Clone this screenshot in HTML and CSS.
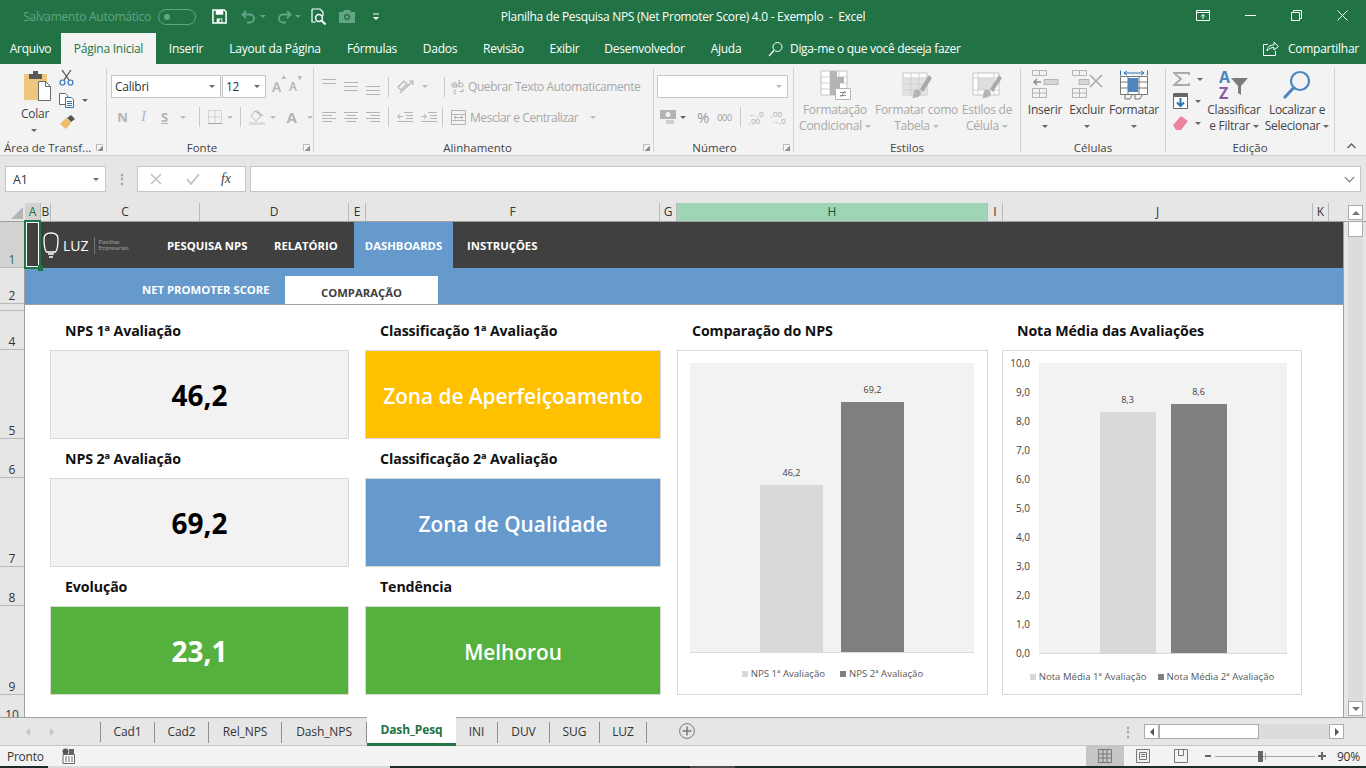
FILE: index.html
```html
<!DOCTYPE html>
<html lang="pt-BR">
<head>
  <meta charset="UTF-8" />
  <title>Planilha de Pesquisa NPS - Excel</title>
  <link rel="stylesheet" href="styles.css">
</head>
<body>
<div class="app">

  <!-- title bar -->
  <header class="titlebar">
    <div class="qat">
      <span class="autosave">Salvamento Automático</span>
      <span class="toggle"><i></i></span>
      <svg class="save" width="15" height="15" viewBox="0 0 16 16"><path d="M1 1h12l2 2v12H1z" fill="none" stroke="#fff" stroke-width="1.6"/><path d="M4 1h8v5H4zM5 10h6v5H5z" fill="#fff"/><path d="M8 11h2v3H8z" fill="#217346"/></svg>
      <svg class="undo" width="16" height="14" viewBox="0 0 16 14"><path d="M5 1 1.5 4.5 5 8M2 4.500h7a4 4 0 0 1 0 8H6" fill="none" stroke="#62a485" stroke-width="1.8"/></svg>
      <b class="caret dim"></b>
      <svg class="redo" width="16" height="14" viewBox="0 0 16 14"><path d="M11 1l3.500 3.500L11 8M14 4.500H7a4 4 0 0 0 0 8h3" fill="none" stroke="#62a485" stroke-width="1.8"/></svg>
      <b class="caret dim"></b>
      <svg class="preview" width="16" height="17" viewBox="0 0 16 17"><path d="M1 1h8l3 3v4M5 14H1V1" fill="none" stroke="#fff" stroke-width="1.2"/><circle cx="8" cy="10" r="3.400" fill="none" stroke="#fff" stroke-width="1.500"/><path d="m10.500 12.500 4 4" stroke="#fff" stroke-width="2"/></svg>
      <svg class="camera" width="16" height="13" viewBox="0 0 16 13"><path d="M0 2h4l1-2h6l1 2h4v11H0z" fill="#62a485"/><circle cx="8" cy="7" r="3" fill="#217346"/><circle cx="8" cy="7" r="1.600" fill="#62a485"/></svg>
      <svg class="custom" width="8" height="8" viewBox="0 0 8 8"><path d="M1 1h6" stroke="#fff"/><path d="M1 4h6L4 7z" fill="#fff"/></svg>
    </div>
    <div class="doc-title">Planilha de Pesquisa NPS (Net Promoter Score) 4.0 - Exemplo &nbsp;-&nbsp; Excel</div>
    <div class="winctl">
      <svg width="14" height="11" viewBox="0 0 14 11"><path d="M.5.500h13v10H.500zM.5 2.500h13M7 9V4.500M5 6.500l2-2 2 2" fill="none" stroke="#fff"/></svg>
      <svg width="11" height="11" viewBox="0 0 11 11"><path d="M0 5.500h11" stroke="#fff"/></svg>
      <svg width="11" height="11" viewBox="0 0 11 11"><path d="M.5 2.500h8v8h-8zM2.500 2.500v-2h8v8h-2" fill="none" stroke="#fff"/></svg>
      <svg width="11" height="11" viewBox="0 0 11 11"><path d="m.5.500 10 10M10.500.500l-10 10" stroke="#fff"/></svg>
    </div>
  </header>

  <!-- ribbon tabs -->
  <nav class="tabs">
    <a>Arquivo</a><a class="on">Página Inicial</a><a>Inserir</a><a>Layout da Página</a><a>Fórmulas</a><a>Dados</a><a>Revisão</a><a>Exibir</a><a>Desenvolvedor</a><a>Ajuda</a>
    <div class="tellme">
      <svg width="16" height="16" viewBox="0 0 16 16"><circle cx="9.500" cy="6" r="4.500" fill="none" stroke="#fff"/><path d="M6 9.500 1 15" stroke="#fff" stroke-width="1.200"/></svg>
      <span>Diga-me o que você deseja fazer</span>
    </div>
    <div class="share">
      <svg width="16" height="15" viewBox="0 0 16 15"><path d="M5 3.500H.5v11h12V10M4 10c0-4 3-6 7-6V1l4.500 4.500L11 9V6.500c-3 0-5 1-7 3.500z" fill="none" stroke="#fff"/></svg>
      <span>Compartilhar</span>
    </div>
  </nav>

  <!-- ribbon -->
  <section class="ribbon">
    <div class="group g-clip">
      <div class="body clip-body">
        <div class="paste">
          <svg width="29" height="31" viewBox="0 0 29 31"><path d="M1 4h23v26H1z" fill="#efc67d"/><path d="M6 4h13v5H6zM10 1h5v4h-5z" fill="#5a5a5a"/><path d="M15.500 11.500h7l5 5v14h-12z" fill="#fff" stroke="#6a6a6a"/><path d="M22.500 11.500v5h5" fill="none" stroke="#6a6a6a"/></svg>
          <span>Colar</span>
          <b class="caret"></b>
        </div>
        <div class="clip-tools">
          <svg width="15" height="16" viewBox="0 0 15 16"><path d="M3 0l7 10M12 0 5 10" stroke="#555" stroke-width="1.300"/><circle cx="3.500" cy="12.500" r="2.500" fill="none" stroke="#2f73b5" stroke-width="1.200"/><circle cx="11.500" cy="12.500" r="2.500" fill="none" stroke="#2f73b5" stroke-width="1.200"/></svg>
          <span class="with-caret"><svg width="16" height="15" viewBox="0 0 16 15"><path d="M.5.500h6l2 2v9h-8z" fill="#fff" stroke="#666"/><path d="M6.500 4.500h6l2 2v8h-8z" fill="#fff" stroke="#2f73b5"/><path d="M8 8.500h5M8 10.500h5M8 12.500h5" stroke="#2f73b5"/></svg><b class="caret"></b></span>
          <svg width="16" height="15" viewBox="0 0 16 15"><path d="M8 3l4-3 4 4-4 3z" fill="#555"/><path d="M1 9l6-6 5 5-5 6z" fill="#edbd6b"/></svg>
        </div>
      </div>
      <div class="glabel clip-label"><span>Área de Transf...</span><i class="launch"></i></div>
    </div>

    <div class="group g-font">
      <div class="body stack">
        <div class="row r-top">
          <div class="combo font-name"><span>Calibri</span><b class="caret"></b></div>
          <div class="combo font-size"><span>12</span><b class="caret"></b></div>
          <span class="grow-a">A<sup>▴</sup></span>
          <span class="shrink-a">A<sup>▾</sup></span>
        </div>
        <div class="row r-bot font-tools">
          <span class="fx fx-n">N</span><span class="fx fx-i">I</span><span class="fx fx-s">S</span><b class="caret off"></b>
          <i class="vsep first"></i>
          <svg width="14" height="14" viewBox="0 0 14 14"><path d="M.5.500h13v13H.500zM7 .5v13M.5 7h13" fill="none" stroke="#b9b9b9" stroke-dasharray="1 1"/><path d="M0 13.500h14" stroke="#a9a9a9"/></svg>
          <b class="caret off"></b>
          <i class="vsep"></i>
          <svg width="16" height="15" viewBox="0 0 16 15"><path d="M6 1l6 5-5 5-5-5z" fill="none" stroke="#b9b9b9"/><path d="M6 1 8 0l7 6-3 0z" fill="#c4c4c4"/><path d="M0 12h16v3H0z" fill="#dcdcdc"/></svg>
          <b class="caret off"></b>
          <span class="fx fx-a">A</span>
          <b class="caret off"></b>
        </div>
      </div>
      <div class="glabel"><span>Fonte</span><i class="launch"></i></div>
    </div>

    <div class="group g-align">
      <div class="body stack">
        <div class="row r-top align-row">
          <svg class="lines" width="14" height="9" viewBox="0 0 14 9"><path d="M0 .5h14M0 4.500h14" stroke="#b4b4b4"/></svg>
          <svg class="lines mid" width="14" height="9" viewBox="0 0 14 9"><path d="M0 .5h14M0 4.500h14M0 8.500h14" stroke="#b4b4b4"/></svg>
          <svg class="lines low" width="14" height="9" viewBox="0 0 14 9"><path d="M0 .5h14M0 4.500h14M0 8.500h14" stroke="#b4b4b4"/></svg>
          <i class="vsep"></i>
          <svg width="17" height="15" viewBox="0 0 17 15"><path d="M1 8l6-6 3 3-6 6zM3 14 15 3M12 2h4v4" fill="none" stroke="#b4b4b4" stroke-width="1.200"/></svg>
          <b class="caret off"></b>
          <i class="vsep wrap-sep"></i>
          <svg class="wrap-ico" width="13" height="15" viewBox="0 0 13 15"><path d="M1 6c0-3 5-3 5 0v2M6 6H2.500C.5 6 .5 8 2.500 8H6M8 1v7M8 5c2-2 4-1 4 1s-2 3-4 1M5 11.500c-3-1-3 3 0 3M12 10v2.500H9" fill="none" stroke="#a9a9a9"/></svg>
          <span class="off-text">Quebrar Texto Automaticamente</span>
        </div>
        <div class="row r-bot align-row">
          <svg class="lines" width="14" height="11" viewBox="0 0 14 11"><path d="M0 .5h14M0 3.500h10M0 6.500h14M0 9.500h10" stroke="#b4b4b4"/></svg>
          <svg class="lines" width="14" height="11" viewBox="0 0 14 11"><path d="M0 .5h14M2 3.500h10M0 6.500h14M2 9.500h10" stroke="#b4b4b4"/></svg>
          <svg class="lines" width="14" height="11" viewBox="0 0 14 11"><path d="M0 .5h14M4 3.500h10M0 6.500h14M4 9.500h10" stroke="#b4b4b4"/></svg>
          <i class="vsep"></i>
          <svg width="16" height="11" viewBox="0 0 16 11"><path d="M7 .5h9M9 3.500h7M9 6.500h7M0 9.500h16M6 4.500H1M3 2 .5 4.500 3 7" fill="none" stroke="#b4b4b4"/></svg>
          <svg width="16" height="11" viewBox="0 0 16 11"><path d="M7 .5h9M9 3.500h7M9 6.500h7M0 9.500h16M0 4.500h5M3 2l2.500 2.500L3 7" fill="none" stroke="#b4b4b4"/></svg>
          <i class="vsep merge-sep"></i>
          <svg class="merge-ico" width="15" height="15" viewBox="0 0 15 15"><path d="M.5.500h14v14H.500zM.5 4.500h14M.5 10.500h14M3 7.500h9M3 7.500l2-1.500M3 7.500 5 9M12 7.500 10 6M12 7.500 10 9" fill="none" stroke="#b4b4b4"/></svg>
          <span class="off-text">Mesclar e Centralizar</span>
          <b class="caret off merge-caret"></b>
        </div>
      </div>
      <div class="glabel"><span>Alinhamento</span><i class="launch"></i></div>
    </div>

    <div class="group g-num">
      <div class="body stack">
        <div class="row r-top">
          <div class="combo num-format"><span></span><b class="caret off"></b></div>
        </div>
        <div class="row r-bot num-row">
          <svg width="16" height="15" viewBox="0 0 16 15"><path d="M0 0h16v9H0z" fill="#b4b4b4"/><circle cx="8" cy="4.500" r="2.500" fill="#f3f3f3"/><path d="M6 11h8M6 13h8" stroke="#c4c4c4" stroke-width="1.500"/></svg>
          <b class="caret"></b>
          <span class="pct">%</span>
          <span class="thou">000</span>
          <i class="vsep"></i>
          <span class="dec">←,0<br>,00</span>
          <span class="dec">,00<br>→,0</span>
        </div>
      </div>
      <div class="glabel"><span>Número</span><i class="launch"></i></div>
    </div>

    <div class="group g-style">
      <div class="body bigs off-text">
        <div class="big b-cond">
          <svg width="31" height="30" viewBox="0 0 31 30"><path d="M1 1h26v24H1z" fill="#fff" stroke="#c4c4c4"/><path d="M10 1v24M19 1v24M1 7h26M1 13h26M1 19h26" stroke="#cfcfcf"/><path d="M10 1h7v6h-7zM10 7h14v6H10zM10 13h10v6H10zM10 19h5v6h-5z" fill="#b4b4b4"/><path d="M15.500 18.500h15v11h-15z" fill="#fff" stroke="#b4b4b4"/><path d="M20 22.500h6M20 25.500h6M25 21l-4 6" stroke="#8e8e8e"/></svg>
          <span>Formatação<br>Condicional<b class="caret off"></b></span>
        </div>
        <div class="big b-tab">
          <svg width="30" height="30" viewBox="0 0 30 30"><path d="M1 3h24v22H1z" fill="#fff" stroke="#c4c4c4"/><path d="M1 8h24v17H1z" fill="#e2e2e2"/><path d="M9 3v22M17 3v22M1 8h24M1 14h24M1 20h24" stroke="#cfcfcf"/><path d="M18 19 27 5l3 3-9 14z" fill="#a9a9a9"/><path d="M12 21a4 4 0 0 1 7 3c-1 3-5 4-9 4 2-1 1-5 2-7z" fill="#b4b4b4"/></svg>
          <span>Formatar como<br>Tabela<b class="caret off"></b></span>
        </div>
        <div class="big b-cell">
          <svg width="30" height="30" viewBox="0 0 30 30"><path d="M1 3h26v22H1z" fill="#fff" stroke="#c4c4c4"/><path d="M6 8h16v12H6z" fill="#dedede"/><path d="M6 3v22M22 3v22M1 8h26M1 20h26" stroke="#cfcfcf"/><path d="M18 19 27 5l3 3-9 14z" fill="#a9a9a9"/><path d="M12 21a4 4 0 0 1 7 3c-1 3-5 4-9 4 2-1 1-5 2-7z" fill="#b4b4b4"/></svg>
          <span>Estilos de<br>Célula<b class="caret off"></b></span>
        </div>
      </div>
      <div class="glabel plain"><span>Estilos</span></div>
    </div>

    <div class="group g-cells">
      <div class="body bigs">
        <div class="big b-ins">
          <svg width="27" height="28" viewBox="0 0 27 28"><path d="M.5.500h14v5H.500zM7.500.5v5M.5 18.500h14v9H.500zM7.500 18.500v9M.5 23h14" fill="none" stroke="#b4b4b4"/><path d="M12 9.500h14v5H12z" fill="#d6d6d6" stroke="#b4b4b4"/><path d="M9 12H2M5 9l-3 3 3 3" fill="none" stroke="#8e8e8e" stroke-width="1.500"/></svg>
          <span>Inserir</span><b class="caret"></b>
        </div>
        <div class="big b-del">
          <svg width="31" height="28" viewBox="0 0 31 28"><path d="M.5.500h14v5H.500zM7.500.5v5M.5 18.500h14v9H.500zM7.500 18.500v9M.5 23h14" fill="none" stroke="#b4b4b4"/><path d="M7 9.500h10v5H7z" fill="#d6d6d6" stroke="#b4b4b4"/><path d="m18 5 12 12M30 5 18 17" stroke="#a9a9a9" stroke-width="1.600"/></svg>
          <span>Excluir</span><b class="caret"></b>
        </div>
        <div class="big b-fmt">
          <svg width="28" height="30" viewBox="0 0 28 30"><path d="M4 3h20M4 3l3-2M4 3l3 2M24 3l-3-2M24 3l-3 2M.5.500v5M27.500.5v5" fill="none" stroke="#2f73b5"/><path d="M.5 6.500h27v18H.500zM8 6.500v18M19 6.500v18M.5 12h27M.5 18h27" fill="#fff" stroke="#777"/><path d="M8 8h10v14H8z" fill="#4d86bf"/><path d="M5 25v4h5l2-4M15 25v4h5l2-4" fill="none" stroke="#777"/></svg>
          <span>Formatar</span><b class="caret"></b>
        </div>
      </div>
      <div class="glabel plain"><span>Células</span></div>
    </div>

    <div class="group g-edit">
      <div class="body edit-body">
        <div class="edit-tools">
          <span class="with-caret"><svg width="17" height="14" viewBox="0 0 17 14"><path d="M16 3V1H1l7 6-7 6h15v-2" fill="none" stroke="#a9a9a9" stroke-width="1.800"/></svg><b class="caret"></b></span>
          <span class="with-caret"><svg width="15" height="16" viewBox="0 0 15 16"><path d="M.5.500h14v15H.500z" fill="#fff" stroke="#666"/><path d="M1 1h13v3H1z" fill="#666"/><path d="M7.500 5v8M4 9.500l3.500 3.500L11 9.500" fill="none" stroke="#2f73b5" stroke-width="2"/></svg><b class="caret"></b></span>
          <span class="with-caret"><svg width="15" height="14" viewBox="0 0 15 14"><path d="M0 9l8-9 7 5-7 9H3z" fill="#e9869b"/></svg><b class="caret"></b></span>
        </div>
        <div class="big b-sort">
          <svg width="30" height="30" viewBox="0 0 30 30"><text x="0" y="13" class="az a">A</text><text x="0" y="29" class="az z">Z</text><path d="M12 8h17l-7 8v9l-3-2v-7z" fill="#7c7c7c"/></svg>
          <span>Classificar<br>e Filtrar<b class="caret"></b></span>
        </div>
        <div class="big b-find">
          <svg width="28" height="30" viewBox="0 0 28 30"><circle cx="17" cy="11" r="9" fill="none" stroke="#4d86bf" stroke-width="2.200"/><path d="M10.500 18 2 27" stroke="#4d86bf" stroke-width="3.200" stroke-linecap="round"/></svg>
          <span>Localizar e<br>Selecionar<b class="caret"></b></span>
        </div>
      </div>
      <div class="glabel plain"><span>Edição</span></div>
    </div>

    <svg class="collapse" width="9" height="6" viewBox="0 0 9 6"><path d="M.5 5 4.500 1l4 4" fill="none" stroke="#666" stroke-width="1.500"/></svg>
  </section>

  <!-- formula bar -->
  <div class="formula">
    <div class="namebox"><span>A1</span><b class="caret"></b></div>
    <span class="dots">⋮</span>
    <div class="fx-btns">
      <svg width="12" height="12" viewBox="0 0 12 12"><path d="m1 1 10 10M11 1 1 11" stroke="#c0c0c0" stroke-width="1.500"/></svg>
      <svg width="14" height="12" viewBox="0 0 14 12"><path d="m1 6 4 5 8-10" fill="none" stroke="#c0c0c0" stroke-width="1.800"/></svg>
      <em>fx</em>
    </div>
    <div class="fx-input"><b class="fold"></b></div>
  </div>

  <!-- column letters -->
  <div class="colbar">
    <div class="corner"><i></i></div>
    <div class="cols">
      <span class="sel">A</span><span>B</span><span>C</span><span>D</span><span>E</span><span>F</span><span>G</span><span class="green">H</span><span>I</span><span>J</span><span>K</span>
    </div>
  </div>

  <!-- sheet -->
  <main class="workarea">
    <div class="rowbar">
      <span class="rh rh1 sel">1</span><span class="rh rh2">2</span><span class="rh rh3"></span><span class="rh rh4">4</span><span class="rh rh5">5</span><span class="rh rh6">6</span><span class="rh rh7">7</span><span class="rh rh8">8</span><span class="rh rh9">9</span><span class="rh rh10">10</span>
    </div>

    <div class="sheet">
      <div class="cursor"></div>
      <div class="menu1">
        <div class="logo">
          <svg width="16" height="26" viewBox="0 0 16 26"><path d="M3.500 20C1 17 1 13 1 7c0-4 2-6 7-6s7 2 7 6c0 6 0 10-2.500 13z" fill="none" stroke="#fff" stroke-width="1.300"/><path d="M5 22h6M6 25h4" stroke="#fff" stroke-width="1.500"/></svg>
          <span class="luz">LUZ</span>
          <span class="logo-sub">Planilhas<br>Empresariais</span>
        </div>
        <a class="m-pesq">PESQUISA NPS</a>
        <a class="m-rel">RELATÓRIO</a>
        <a class="m-dash">DASHBOARDS</a>
        <a class="m-inst">INSTRUÇÕES</a>
      </div>
      <div class="menu2">
        <a class="m-net">NET PROMOTER SCORE</a>
        <a class="m-comp">COMPARAÇÃO</a>
      </div>

      <div class="dash">
        <div class="kpis">
          <h3>NPS 1ª Avaliação</h3>
          <h3 class="h-right">Classificação 1ª Avaliação</h3>
          <div class="card value">46,2</div>
          <div class="card zone amber">Zona de Aperfeiçoamento</div>
          <h3>NPS 2ª Avaliação</h3>
          <h3 class="h-right">Classificação 2ª Avaliação</h3>
          <div class="card value">69,2</div>
          <div class="card zone blue">Zona de Qualidade</div>
          <h3>Evolução</h3>
          <h3 class="h-right">Tendência</h3>
          <div class="card zone big-num green">23,1</div>
          <div class="card zone green">Melhorou</div>
        </div>

        <div class="chart-col c1">
          <h3>Comparação do NPS</h3>
          <div class="chart">
            <div class="plot p1">
              <div class="barwrap"><span>46,2</span><div class="bar light" style="height:167px"></div></div>
              <div class="barwrap"><span>69,2</span><div class="bar dark" style="height:250px"></div></div>
            </div>
            <div class="legend">
              <span><i class="light"></i>NPS 1ª Avaliação</span>
              <span><i class="dark"></i>NPS 2ª Avaliação</span>
            </div>
          </div>
        </div>

        <div class="chart-col c2">
          <h3>Nota Média das Avaliações</h3>
          <div class="chart">
            <div class="chart2-body">
              <div class="yaxis"><span>10,0</span><span>9,0</span><span>8,0</span><span>7,0</span><span>6,0</span><span>5,0</span><span>4,0</span><span>3,0</span><span>2,0</span><span>1,0</span><span>0,0</span></div>
              <div class="plot p2">
                <div class="barwrap"><span>8,3</span><div class="bar light" style="height:241px"></div></div>
                <div class="barwrap"><span>8,6</span><div class="bar dark" style="height:249px"></div></div>
              </div>
            </div>
            <div class="legend">
              <span><i class="light"></i>Nota Média 1ª Avaliação</span>
              <span><i class="dark"></i>Nota Média 2ª Avaliação</span>
            </div>
          </div>
        </div>
      </div>
    </div>

    <div class="vscroll">
      <div class="sbtn up"><b></b></div>
      <div class="vthumb"></div>
      <div class="vtrack"></div>
      <div class="sbtn down"><b></b></div>
    </div>
  </main>

  <!-- sheet tabs -->
  <div class="sheetbar">
    <div class="tabnav"><b class="nav-l"></b><b class="nav-r"></b></div>
    <div class="sheettabs">
      <a>Cad1</a><a>Cad2</a><a>Rel_NPS</a><a>Dash_NPS</a><a class="on">Dash_Pesq</a><a>INI</a><a>DUV</a><a>SUG</a><a>LUZ</a>
    </div>
    <svg class="addsheet" width="16" height="16" viewBox="0 0 16 16"><circle cx="8" cy="8" r="7.400" fill="none" stroke="#7a7a7a"/><path d="M8 3.500v9M3.500 8h9" stroke="#7a7a7a" stroke-width="1.500"/></svg>
    <span class="dots hdots">⋮</span>
    <div class="hscroll">
      <div class="sbtn left"><b></b></div>
      <div class="hthumb"></div>
      <div class="htrack"></div>
      <div class="sbtn right"><b></b></div>
    </div>
  </div>

  <!-- status bar -->
  <footer class="status">
    <span class="ready">Pronto</span>
    <svg class="macro" width="13" height="16" viewBox="0 0 13 16"><circle cx="3.500" cy="3.500" r="3" fill="#555"/><path d="M1 6.500h11.500v9H1z" fill="#fff" stroke="#666"/><path d="M7 1h5v5H7z" fill="#666"/><path d="M3 9h2M6 9h2M9 9h2M3 11h2M6 11h2M9 11h2M3 13h2M6 13h2M9 13h2" stroke="#666"/></svg>
    <div class="views">
      <span class="view on"><svg width="14" height="14" viewBox="0 0 14 14"><path d="M.5.500h13v13H.500zM5 .5v13M9 .5v13M.5 5h13M.5 9h13" fill="none" stroke="#777"/></svg></span>
      <span class="view"><svg width="14" height="14" viewBox="0 0 14 14"><path d="M.5.500h13v13H.500zM3.500 3.500h7v7h-7zM5 5.500h4M5 7.500h4" fill="none" stroke="#777"/></svg></span>
      <span class="view"><svg width="14" height="14" viewBox="0 0 14 14"><path d="M.5 13.500V.5h13v13zM4.500.5v6h5v-6" fill="none" stroke="#777"/></svg></span>
    </div>
    <div class="zoom">
      <i class="minus"></i>
      <div class="slider"><i class="tick"></i><i class="knob"></i></div>
      <i class="plus"></i>
      <span>90%</span>
    </div>
  </footer>
  <div class="edge"><i></i><i></i><i></i><i></i></div>
</div>
</body>
</html>
```

FILE: styles.css
```css
* { box-sizing: border-box; }
html, body { margin: 0; height: 100%; overflow: hidden; }
body {
  background: #e6e6e6;
  color: #333;
  font-family: "Open Sans", "Noto Sans", sans-serif;
  font-size: 12px;
  letter-spacing: -0.25px;
}
a { display: block; }
svg { display: block; flex: none; }
h3 { margin: 0; }

.app { width: 1366px; height: 768px; display: flex; flex-direction: column; }

.caret {
  display: inline-block;
  width: 0;
  height: 0;
  border-left: 3.5px solid transparent;
  border-right: 3.5px solid transparent;
  border-top: 3.5px solid #666;
  flex: none;
}
.caret.off { border-top-color: #bcbcbc; }
.caret.dim { border-top-color: #62a485; }

/* title bar */
.titlebar {
  height: 33px;
  background: #217346;
  color: #fff;
  display: grid;
  grid-template-columns: 466px 1fr 466px;
  align-items: center;
}
.qat { display: flex; align-items: center; padding-left: 23px; }
.autosave { color: #62a485; width: 135px; }
.toggle {
  width: 38px;
  height: 16px;
  border: 1px solid #62a485;
  border-radius: 8px;
  padding: 4px 5px;
}
.toggle i { display: block; width: 6px; height: 6px; border-radius: 50%; background: #62a485; }
.save { margin-left: 16px; }
.undo { margin-left: 14px; }
.qat .caret { margin-left: 3px; border-width: 3px 3px 0; }
.redo { margin-left: 10px; }
.preview { margin-left: 10px; }
.camera { margin-left: 12px; }
.custom { margin-left: 17px; }
.doc-title { text-align: center; white-space: nowrap; letter-spacing: -0.3px; }
.winctl { display: flex; justify-content: flex-end; align-items: center; gap: 35px; padding-right: 18px; margin-top: -3px; }

/* ribbon tabs */
.tabs {
  height: 31px;
  background: #217346;
  color: #fff;
  display: grid;
  grid-template-columns: 61px 95px 60px 118px 76px 60px 67px 55px 105px 58px 1fr auto;
  align-items: stretch;
  line-height: 31px;
}
.tabs a { text-align: center; }
.tabs a.on { background: #f3f3f3; color: #217346; }
.tellme { display: flex; align-items: center; gap: 6px; padding-left: 13px; letter-spacing: -0.33px; }
.share { display: flex; align-items: center; gap: 9px; padding-right: 7px; }

/* ribbon */
.ribbon {
  height: 92px;
  background: #f3f3f3;
  border-bottom: 1px solid #d2d2d2;
  display: flex;
  color: #444;
  position: relative;
}
.group { display: flex; flex-direction: column; margin-top: 4px; height: 84px; border-right: 1px solid #d2d2d2; flex: none; }
.g-clip { width: 107px; }
.g-font { width: 207px; }
.g-align { width: 340px; }
.g-num { width: 140px; }
.g-style { width: 227px; }
.g-cells { width: 145px; }
.g-edit { width: 169px; }
.body { flex: 1; min-height: 0; }
.glabel { height: 15px; margin-bottom: -3px; text-align: center; position: relative; line-height: 15px; font-size: 11.5px; letter-spacing: 0; }
.g-font .glabel { padding-right: 16px; }
.g-align .glabel { padding-right: 12px; }
.g-num .glabel { padding-right: 18px; }
.launch {
  position: absolute;
  right: 3px;
  top: 4px;
  width: 7px;
  height: 7px;
  border-left: 1px solid #bdbdbd;
  border-top: 1px solid #bdbdbd;
  background: linear-gradient(135deg, transparent 55%, #8f8f8f 55%);
}
.clip-label { text-align: left; padding-left: 4px; }
.clip-body { display: flex; }
.paste { width: 59px; padding: 2px 0 0 23px; display: flex; flex-direction: column; align-items: flex-start; }
.paste span { margin: 5px 0 0 -2px; line-height: 16px; }
.paste .caret { margin: 7px 0 0 8px; }
.clip-tools { display: flex; flex-direction: column; gap: 7px; padding-top: 2px; }
.with-caret { display: flex; align-items: center; gap: 7px; }

.stack { display: flex; flex-direction: column; }
.row { display: flex; align-items: center; }
.r-top { height: 23px; margin-top: 7px; }
.r-bot { height: 20px; margin-top: 9px; }
.g-font .row, .g-align .row, .g-num .row { padding-left: 4px; }

.combo {
  height: 23px;
  background: #fff;
  border: 1px solid #c6c6c6;
  display: flex;
  align-items: center;
  justify-content: space-between;
  padding: 0 5px 0 3px;
  color: #333;
}
.font-name { width: 110px; margin-left: 0; }
.font-size { width: 44px; margin-left: 1px; }
.grow-a, .shrink-a { color: #b4b4b4; font-size: 14px; font-weight: 600; position: relative; }
.grow-a { margin-left: 6px; }
.shrink-a { margin-left: 8px; font-size: 12px; }
.grow-a sup, .shrink-a sup { position: absolute; top: -4px; right: -5px; font-size: 7px; color: #b4b4b4; line-height: 1; }

.g-font .font-tools { padding-left: 5px; }
.fx { color: #b4b4b4; font-weight: 700; font-size: 13px; width: 21px; text-align: center; }
.fx-i { font-style: italic; font-family: "Liberation Serif", serif; font-weight: 400; font-size: 14px; }
.fx-s { text-decoration: underline; }
.fx-a { font-size: 15px; margin-left: 5px; }
.font-tools .caret { margin-left: 5px; margin-right: 0; }
.vsep { width: 1px; height: 20px; background: #c8c8c8; margin: 0 8px; flex: none; }
.font-tools .vsep { margin: 0 8px 0 7px; }
.font-tools .vsep.first { margin-left: 13px; }

.g-align .align-row { gap: 8px; padding-left: 8px; }
.align-row .vsep { margin: 0; }
.lines { align-self: center; margin-top: -6px; }
.lines.mid { margin-top: 0; }
.lines.low { margin-top: 8px; }
.r-bot .lines { margin-top: 0; }
.align-row .wrap-sep { margin: 0 -2px 0 8px; }
.align-row .merge-sep { margin-left: -3px; }
.off-text { color: #a8a8a8; white-space: nowrap; }
.align-row .off-text { letter-spacing: -0.43px; }
.wrap-ico, .merge-ico { margin-right: -4px; }
.merge-caret { margin-left: 4px; }

.num-format { width: 131px; margin-left: -1px; justify-content: flex-end; }
.g-num .num-row { gap: 8px; padding-left: 6px; }
.num-row .vsep { margin: 0; height: 20px; }
.num-row .caret { margin-left: -4px; }
.pct { color: #999; font-size: 15px; margin-left: 3px; }
.thou { color: #999; font-size: 9px; }
.dec { color: #aaa; font-size: 8px; line-height: 7px; letter-spacing: 0; width: 14px; }

.bigs { display: flex; }
.g-style .bigs { padding-left: 1px; }
.big { display: flex; flex-direction: column; align-items: center; padding-top: 2px; text-align: center; white-space: nowrap; flex: none; }
.big svg { margin-bottom: 2px; }
.big span { line-height: 16px; margin-top: 0; }
.big span .caret { margin-left: 3px; vertical-align: 2px; border-width: 3px 3px 0; }
.big > .caret { margin-top: 7px; }
.b-cond { width: 80px; margin-left: 0; }
.b-tab { width: 83px; }
.b-cell { width: 58px; }
.b-ins { width: 48px; margin-left: 0; }
.b-ins svg, .b-del svg { margin-bottom: 4px; }
.b-del { width: 36px; }
.b-fmt { width: 58px; }
.edit-body { display: flex; }
.edit-tools { width: 38px; padding: 4px 0 0 7px; display: flex; flex-direction: column; gap: 7px; }
.b-sort { width: 66px; margin-left: -3px; }
.b-find { width: 60px; }
.az { font-size: 16px; font-weight: 700; font-family: "Open Sans", sans-serif; }
.az.a { fill: #4d86bf; }
.az.z { fill: #8a5aa8; }
.collapse { position: absolute; right: 10px; bottom: 6px; }

/* formula bar */
.formula { height: 47px; display: flex; padding: 10px 5px 11px; }
.namebox {
  width: 101px;
  background: #fff;
  border: 1px solid #c6c6c6;
  display: flex;
  align-items: center;
  justify-content: space-between;
  padding: 0 6px 0 7px;
  font-size: 12.5px;
}
.dots { width: 31px; text-align: center; line-height: 25px; color: #9a9a9a; font-weight: 700; }
.fx-btns {
  width: 109px;
  background: #fff;
  border: 1px solid #c6c6c6;
  display: flex;
  align-items: center;
  padding-left: 12px;
  gap: 24px;
}
.fx-btns em { font-family: "Liberation Serif", serif; font-size: 14px; color: #444; margin-left: -3px; }
.fx-input { flex: 1; margin-left: 4px; background: #fff; border: 1px solid #c6c6c6; display: flex; align-items: center; justify-content: flex-end; padding-right: 5px; }
.fold { width: 7px; height: 7px; border-right: 1.5px solid #666; border-bottom: 1.5px solid #666; transform: rotate(45deg); margin: -3px 2px 0 0; }

/* column letters */
.colbar { height: 19px; display: flex; border-bottom: 1px solid #9f9f9f; }
.corner { width: 25px; position: relative; }
.corner i {
  position: absolute;
  left: 11px;
  top: 4px;
  border-left: 12px solid transparent;
  border-bottom: 12px solid #b4b4b4;
}
.cols {
  display: grid;
  grid-template-columns: 16px 10px 149px 149px 17px 294px 17px 311px 15px 310px 16px;
  color: #333;
}
.cols span { text-align: center; line-height: 18px; border-right: 1px solid #b9b9b9; letter-spacing: 0; }
.cols .sel { background: #d2d2d2; color: #217346; }
.cols .green { background: #9fd5b7; color: #0f5a32; }

/* work area */
.workarea { height: 495px; display: flex; }
.rowbar { width: 25px; display: flex; flex-direction: column; border-right: 1px solid #9f9f9f; overflow: hidden; }
.rh { display: flex; align-items: flex-end; justify-content: center; border-bottom: 1px solid #b9b9b9; flex: none; line-height: 14px; letter-spacing: 0; }
.rh1 { height: 46px; }
.rh1.sel { background: #d2d2d2; color: #217346; }
.rh2 { height: 36px; }
.rh3 { height: 7px; }
.rh4 { height: 39px; }
.rh5 { height: 89px; }
.rh6 { height: 39px; }
.rh7 { height: 89px; }
.rh8 { height: 39px; }
.rh9 { height: 89px; }
.rh10 { height: 27px; border-bottom: 0; }

.sheet { width: 1319px; background: #fff; position: relative; border-right: 1px solid #9f9f9f; }
.cursor {
  position: absolute;
  left: -1px;
  top: -2px;
  width: 17px;
  height: 49px;
  border: 2px solid #217346;
  box-shadow: inset 0 0 0 1px #fff;
  z-index: 2;
}
.cursor::after {
  content: "";
  position: absolute;
  right: -4px;
  bottom: -4px;
  width: 5px;
  height: 6px;
  background: #217346;
}

.menu1 { height: 46px; background: #404040; color: #fff; font-weight: 700; font-size: 11.3px; letter-spacing: 0; display: flex; align-items: stretch; line-height: 48px; }
.logo { width: 142px; display: flex; align-items: center; padding-left: 18px; font-weight: 400; line-height: 1; }
.luz { font-size: 14px; margin-left: 4px; padding-right: 5px; border-right: 1px solid #777; line-height: 17px; }
.logo-sub { font-size: 5px; margin-left: 4px; color: #aaa; line-height: 6px; }
.m-pesq { width: 107px; }
.m-rel { width: 80px; }
.m-dash { width: 99px; background: #6699cc; text-align: center; }
.m-inst { margin-left: 14px; }

.menu2 { height: 37px; background: #6699cc; border-bottom: 1px solid #a0a0a0; color: #fff; font-weight: 700; font-size: 11.3px; letter-spacing: 0; display: flex; padding-top: 8px; line-height: 27px; }
.m-net { width: 260px; padding-left: 117px; white-space: nowrap; }
.m-comp { width: 153px; background: #fff; color: #404040; text-align: center; line-height: 34px; }

.dash { display: flex; padding: 6px 0 0 25px; gap: 16px; }
.kpis { display: grid; grid-template-columns: 299px 296px; column-gap: 16px; grid-template-rows: 39px 89px 39px 89px 39px 89px; }
.dash h3 { font-size: 14.2px; font-weight: 700; color: #111; padding-top: 10px; line-height: 20px; letter-spacing: -0.1px; white-space: nowrap; }
.kpis h3 { padding-left: 15px; }
.card { display: flex; align-items: center; justify-content: center; border: 1px solid #d9d9d9; }
.card.value { background: #f2f2f2; font-size: 28px; font-weight: 700; color: #000; letter-spacing: 0; }
.card.zone { color: #fff; font-size: 20.8px; font-weight: 600; letter-spacing: 0; padding-top: 2px; }
.card.big-num { font-size: 28px; font-weight: 700; padding-top: 0; }
.amber { background: #ffc000; }
.blue { background: #6699cc; }
.card.green { background: #55b03e; }

.chart-col h3 { padding-left: 15px; height: 39px; }
.c1 { width: 311px; margin-right: -2px; }
.c2 { width: 300px; }
.chart { height: 345px; border: 1px solid #d9d9d9; background: #fff; font-size: 9px; color: #404040; letter-spacing: 0; display: flex; flex-direction: column; }
.plot { background: #f2f2f2; display: flex; justify-content: center; align-items: flex-end; border-bottom: 1px solid #d9d9d9; }
.p1 { width: 284px; height: 290px; margin: 12px 0 0 12px; gap: 18px; }
.p2 { width: 248px; height: 291px; gap: 15px; }
.barwrap { display: flex; flex-direction: column; align-items: center; }
.barwrap span { line-height: 12px; margin-bottom: 6px; }
.bar { width: 63px; }
.p2 .bar { width: 56px; }
.light { background: #d9d9d9; }
.dark { background: #7f7f7f; }
.chart2-body { display: flex; margin-top: 12px; }
.yaxis { width: 36px; height: 302px; margin-top: -6px; display: flex; flex-direction: column; justify-content: space-between; text-align: right; font-size: 10px; line-height: 12px; padding: 0 9px 0 0; }
.legend { flex: 1; display: flex; justify-content: center; align-items: center; gap: 15px; font-size: 9.6px; color: #595959; }
.c2 .legend { gap: 11px; }
.legend span { display: flex; align-items: center; gap: 3px; white-space: nowrap; }
.legend i { width: 6px; height: 6px; }

/* scrollbars */
.vscroll { flex: 1; display: flex; flex-direction: column; padding: 0 3px 1px 4px; margin-top: -17px; }
.sbtn { background: #fff; border: 1px solid #ababab; display: flex; align-items: center; justify-content: center; flex: none; }
.vscroll .sbtn { height: 15px; }
.up b { border-left: 4px solid transparent; border-right: 4px solid transparent; border-bottom: 4px solid #777; }
.down b { border-left: 4px solid transparent; border-right: 4px solid transparent; border-top: 4px solid #777; }
.vthumb { height: 16px; margin-top: 1px; background: #fff; border: 1px solid #ababab; }
.vtrack { flex: 1; background: #dcdcdc; }

/* sheet tabs */
.sheetbar { height: 28px; border-top: 1px solid #9f9f9f; display: flex; align-items: stretch; position: relative; }
.tabnav { width: 100px; display: flex; align-items: center; padding-left: 26px; gap: 20px; }
.nav-l { border-top: 4px solid transparent; border-bottom: 4px solid transparent; border-right: 4px solid #c4c4c4; }
.nav-r { border-top: 4px solid transparent; border-bottom: 4px solid transparent; border-left: 4px solid #c4c4c4; }
.sheettabs { display: grid; grid-template-columns: 54px 54px 73px 85px 89px 42px 52px 50px 47px; border-left: 1px solid #8f8f8f; margin: 4px 0 3px; }
.sheettabs a { text-align: center; line-height: 20px; border-right: 1px solid #8f8f8f; letter-spacing: -0.1px; }
.sheettabs a.on { background: #fff; color: #217346; font-weight: 700; margin: -5px 0 -3px; line-height: 26px; border-right: 0; border-bottom: 3px solid #217346; }
.addsheet { position: absolute; left: 679px; top: 5px; }
.hdots { position: absolute; left: 1112px; top: 0; line-height: 27px; }
.hscroll { position: absolute; left: 1144px; top: 6px; width: 200px; height: 15px; display: flex; }
.hscroll .sbtn { width: 15px; }
.left b { border-top: 4px solid transparent; border-bottom: 4px solid transparent; border-right: 4px solid #555; }
.right b { border-top: 4px solid transparent; border-bottom: 4px solid transparent; border-left: 4px solid #555; }
.hthumb { width: 100px; background: #fff; border: 1px solid #ababab; }
.htrack { flex: 1; background: #dcdcdc; }

/* status bar */
.status { height: 21px; background: #f3f3f3; border-top: 1px solid #c6c6c6; display: flex; align-items: center; }
.ready { padding-left: 7px; width: 62px; }
.views { margin-left: auto; display: flex; height: 100%; margin-right: 5px; }
.view { width: 38px; display: flex; align-items: center; justify-content: center; }
.view.on { background: #c6c6c6; }
.zoom { display: flex; align-items: center; width: 161px; }
.minus { width: 6px; height: 2px; background: #666; }
.plus { width: 8px; height: 8px; background: linear-gradient(#666,#666) center/8px 2px no-repeat, linear-gradient(#666,#666) center/2px 8px no-repeat; }
.slider { width: 100px; height: 1px; background: #a6a6a6; margin: 0 3px 0 4px; position: relative; }
.knob { position: absolute; left: 43px; top: -5px; width: 5px; height: 11px; background: #666; }
.tick { position: absolute; left: 50px; top: -3px; width: 1px; height: 7px; background: #a6a6a6; }
.zoom span { margin-left: 11px; }

.edge { height: 2px; display: grid; grid-template-columns: 48px 342px 300px 45px 1fr; }
.edge::before { content: ""; background: #1d2b26; }
.edge i:nth-child(1) { background: #d9d9d9; }
.edge i:nth-child(2) { background: #1d2b26; }
.edge i:nth-child(3) { background: #4a4f4d; }
.edge i:nth-child(4) { background: #1d2b26; }
```
